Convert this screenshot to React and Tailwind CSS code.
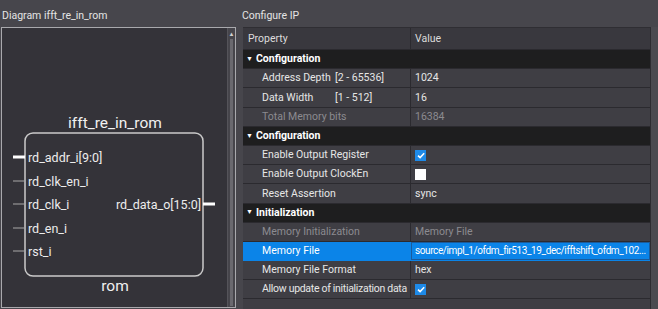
import React from 'react';

const FONT = { fontFamily: 'Roboto, Lato, sans-serif' };

const rows = [
  { type: 'section', label: 'Configuration' },
  { label: 'Address Depth', range: '[2 - 65536]', value: '1024' },
  { label: 'Data Width', range: '[1 - 512]', value: '16' },
  { label: 'Total Memory bits', value: '16384', muted: true },
  { type: 'section', label: 'Configuration' },
  { label: 'Enable Output Register', check: true },
  { label: 'Enable Output ClockEn', check: false },
  { label: 'Reset Assertion', value: 'sync' },
  { type: 'section', label: 'Initialization' },
  { label: 'Memory Initialization', value: 'Memory File', muted: true },
  {
    label: 'Memory File',
    value: 'source/impl_1/ofdm_fir513_19_dec/ifftshift_ofdm_102...',
    selected: true,
  },
  { label: 'Memory File Format', value: 'hex' },
  { label: 'Allow update of initialization data', check: true, tight: true },
];

const CheckBox = ({ checked }) =>
  checked ? (
    <span className="w-[11px] h-[11px] bg-[#1e8ae8] flex items-center justify-center">
      <svg width="8" height="7" viewBox="0 0 8 7">
        <path d="M1 3.6 L3.1 5.6 L7.2 1.2" stroke="#ffffff" strokeWidth="1.5" fill="none" />
      </svg>
    </span>
  ) : (
    <span className="w-[11px] h-[11px] bg-white block" />
  );

const Row = ({ row }) => {
  if (row.type === 'section') {
    return (
      <div className="h-[19.2px] flex items-center bg-[#1e1e1f] border-b border-[#2b2a2f] whitespace-nowrap">
        <span className="text-[7px] text-white ml-[3px] w-[10px]">▼</span>
        <span className="text-[10.5px] font-bold text-white">{row.label}</span>
      </div>
    );
  }

  const textColor = row.muted ? 'text-[#8c8b90]' : 'text-[#e6e6e6]';

  return (
    <div
      className={`h-[19.2px] flex border-b whitespace-nowrap ${
        row.selected ? 'bg-[#0b84e8] border-[#0b84e8]' : 'bg-[#3f3e44] border-[#2b2a2f]'
      }`}
    >
      <div
        className={`w-[168px] flex items-center pl-[19px] text-[10.5px] border-r overflow-hidden ${
          row.tight ? 'tracking-[-0.3px]' : ''
        } ${row.selected ? 'border-[#0b84e8] text-white' : `border-[#2b2a2f] ${textColor}`}`}
      >
        <span className={row.range ? 'w-[73px]' : ''}>{row.label}</span>
        {row.range && <span>{row.range}</span>}
      </div>
      <div
        className={`flex-1 flex items-center pl-[4px] overflow-hidden ${
          row.selected
            ? 'text-white text-[10px] tracking-[-0.4px] outline outline-1 outline-[#1b5b9b] -outline-offset-1'
            : `text-[10.5px] ${textColor}`
        }`}
      >
        {row.check !== undefined ? <CheckBox checked={row.check} /> : row.value}
      </div>
    </div>
  );
};

const ports = ['rd_addr_i[9:0]', 'rd_clk_en_i', 'rd_clk_i', 'rd_en_i', 'rst_i'];

const Diagram = () => (
  <svg width="226" height="279" viewBox="0 0 226 279" style={FONT}>
    <text x="113" y="100" fill="#f0f0f0" fontSize="15.5" textAnchor="middle">
      ifft_re_in_rom
    </text>
    <rect x="23" y="105" width="178" height="143" rx="8" fill="none" stroke="#cacaca" strokeWidth="1.5" />
    {ports.map((p, i) => {
      const cy = [129, 153, 176, 200, 223][i];
      return (
        <g key={p}>
          {i === 0 ? (
            <rect x="11" y={cy - 1.5} width="12" height="3" fill="#ffffff" />
          ) : (
            <line x1="11" y1={cy} x2="23" y2={cy} stroke="#a8a8a8" strokeWidth="1" />
          )}
          <text x="26" y={cy + 4.5} fill="#ececec" fontSize="12.5">
            {p}
          </text>
        </g>
      );
    })}
    <text x="199" y="180.5" fill="#ececec" fontSize="12.5" textAnchor="end">
      rd_data_o[15:0]
    </text>
    <rect x="201" y="174.5" width="12" height="3" fill="#ffffff" />
    <text x="113" y="263" fill="#f0f0f0" fontSize="15.5" textAnchor="middle">
      rom
    </text>
  </svg>
);

export default function App() {
  return (
    <div className="w-[658px] h-[309px] bg-[#47464c] flex overflow-hidden" style={FONT}>
      {/* Diagram panel */}
      <div className="w-[236px] flex flex-col">
        <div className="h-[27px] pl-[2px] pt-[8px] text-[10.5px] leading-[15px] text-[#e4e4e4] whitespace-nowrap">
          Diagram ifft_re_in_rom
        </div>
        <div className="flex-1 ml-[1px] mb-[1px] border border-[#a9a9ad] bg-[#343339] flex">
          <div className="flex-1 overflow-hidden">
            <Diagram />
          </div>
          <div className="w-[8px] border-l border-[#55545a] bg-[#46454b] flex flex-col items-center">
            <span className="text-[6px] leading-[10px] text-[#d0d0d0] mt-[1px]">▲</span>
            <div className="w-[3px] flex-1 bg-[#6a696f] mb-[1px]" />
          </div>
        </div>
      </div>

      {/* Configure IP panel */}
      <div className="flex-1 flex flex-col">
        <div className="h-[27px] pl-[6px] pt-[8px] text-[10.5px] leading-[15px] text-[#e4e4e4] whitespace-nowrap">
          Configure IP
        </div>
        <div className="flex-1 flex pl-[7px]">
          <div className="w-[407px] bg-[#3f3e44] border-t border-[#2f2e33] flex flex-col">
            <div className="h-[22px] flex bg-[#39383e] border-b border-[#2b2a2f] text-[10.5px] text-[#dcdcdc]">
              <div className="w-[168px] pl-[5px] flex items-center border-r border-[#2b2a2f]">Property</div>
              <div className="flex-1 pl-[4px] flex items-center">Value</div>
            </div>
            {rows.map((row, i) => (
              <Row key={i} row={row} />
            ))}
          </div>
          <div className="w-[1px] bg-[#2d2c31]" />
          <div className="flex-1 bg-[#4b4a50]" />
        </div>
      </div>
    </div>
  );
}
